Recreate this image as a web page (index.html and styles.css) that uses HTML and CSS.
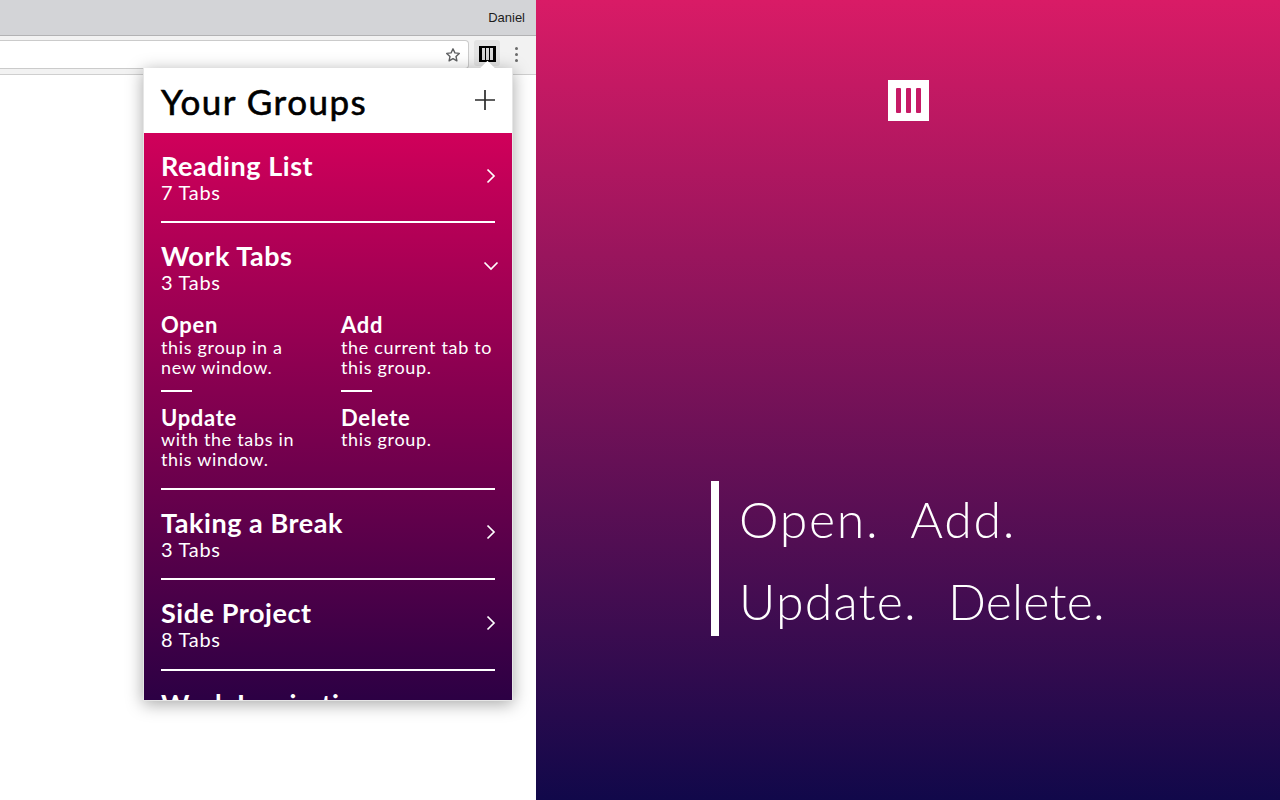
FILE: index.html
```html
<!DOCTYPE html>
<html lang="en">
<head>
<meta charset="utf-8">
<title>Tab groups</title>
<link rel="stylesheet" href="styles.css">
</head>
<body>
<main class="stage">
  <section class="browser">
    <div class="titlebar"><span class="user">Daniel</span></div>
    <div class="toolbar">
      <div class="omnibox">
        <svg class="star" viewBox="0 0 16 16" width="16" height="16"><path d="M8 1.8l1.9 4.1 4.4.5-3.3 3 .9 4.4L8 11.6l-3.9 2.2.9-4.4-3.3-3 4.4-.5z" fill="none" stroke="#5f6062" stroke-width="1.4" stroke-linejoin="round"/></svg>
      </div>
      <div class="ext">
        <span class="ext-logo"><i></i><i></i><i></i></span>
      </div>
      <div class="dots"><i></i><i></i><i></i></div>
    </div>
    <div class="popup">
      <span class="caret"></span>
      <header class="popup-head">
        <h1>Your Groups</h1>
        <svg class="plus" viewBox="0 0 20 20" width="20" height="20"><path d="M10 0v20M0 10h20" stroke="#2b2b2b" stroke-width="1.7" fill="none"/></svg>
      </header>
      <div class="groups">
        <article class="group">
          <div class="group-top">
            <div><h2>Reading List</h2><p class="count">7 Tabs</p></div>
            <svg class="chev" viewBox="0 0 10 16" width="10" height="16"><path d="M1.5 1.5L8 8l-6.500 6.500" fill="none" stroke="#fff" stroke-width="1.700"/></svg>
          </div>
        </article>
        <article class="group open">
          <div class="group-top">
            <div><h2>Work Tabs</h2><p class="count">3 Tabs</p></div>
            <svg class="chev-down" viewBox="0 0 16 10" width="16" height="10"><path d="M1.500 1.500L8 8l6.500-6.500" fill="none" stroke="#fff" stroke-width="1.700"/></svg>
          </div>
          <div class="actions">
            <div class="action ruled"><h3>Open</h3><p>this group in a<br>new window.</p></div>
            <div class="action ruled"><h3>Add</h3><p>the current tab to<br>this group.</p></div>
            <div class="action"><h3>Update</h3><p>with the tabs in<br>this window.</p></div>
            <div class="action"><h3>Delete</h3><p>this group.</p></div>
          </div>
        </article>
        <article class="group">
          <div class="group-top">
            <div><h2>Taking a Break</h2><p class="count">3 Tabs</p></div>
            <svg class="chev" viewBox="0 0 10 16" width="10" height="16"><path d="M1.5 1.5L8 8l-6.500 6.500" fill="none" stroke="#fff" stroke-width="1.700"/></svg>
          </div>
        </article>
        <article class="group">
          <div class="group-top">
            <div><h2>Side Project</h2><p class="count">8 Tabs</p></div>
            <svg class="chev" viewBox="0 0 10 16" width="10" height="16"><path d="M1.5 1.5L8 8l-6.500 6.500" fill="none" stroke="#fff" stroke-width="1.700"/></svg>
          </div>
        </article>
        <article class="group">
          <div class="group-top">
            <div><h2>Work Inspiration</h2></div>
          </div>
        </article>
      </div>
    </div>
  </section>
  <section class="promo">
    <div class="logo"><i></i><i></i><i></i></div>
    <div class="tagline">
      <p class="wide"><span>Open.</span><span>Add.</span></p>
      <p><span>Update.</span><span class="tight">Delete.</span></p>
    </div>
  </section>
</main>
</body>
</html>
```
FILE: styles.css
```css
* { box-sizing: border-box; }
html, body { margin: 0; padding: 0; }
body { width: 1280px; height: 800px; overflow: hidden; font-family: "Lato", "Noto Sans", sans-serif; background: #fff; }
h1, h2, h3, p { margin: 0; font-weight: normal; }

.stage { display: flex; width: 1280px; height: 800px; }

.browser { position: relative; width: 536px; height: 800px; background: #fff; flex: none; }
.titlebar { height: 36px; background: #d3d4d7; border-bottom: 1px solid #b2b2b4; display: flex; justify-content: flex-end; align-items: center; padding: 0 11px 0 0; }
.user { font-family: "Liberation Sans", sans-serif; font-size: 13px; color: #1c1c1c; }
.toolbar { height: 39px; background: #f2f2f2; border-bottom: 1px solid #cfcfcf; display: flex; align-items: flex-start; padding-top: 4px; }
.omnibox { width: 469px; height: 29px; background: #fff; border: 1px solid #cbcbcb; border-left: 0; border-radius: 0 4px 4px 0; display: flex; justify-content: flex-end; align-items: center; padding-right: 7px; flex: none; }
.star { display: block; }
.ext { width: 26px; height: 26px; margin-left: 5px; background: #e3e3e3; border-radius: 3px; display: flex; align-items: center; justify-content: center; flex: none; padding-top: 2px; }
.ext-logo { width: 17px; height: 16px; background: #000; display: flex; justify-content: center; gap: 1px; padding-top: 2px; }
.ext-logo i { width: 3px; height: 12px; background: #d8d8d8; }
.dots { margin-left: 15px; padding-top: 7px; display: flex; flex-direction: column; gap: 3px; }
.dots i { display: block; width: 3px; height: 3px; border-radius: 50%; background: #6a6a6a; }

.popup { position: absolute; left: 143px; top: 68px; width: 370px; height: 633px; background: #fff; border: 1px solid #e6e6e6; border-top: 0; box-shadow: 0 3px 16px rgba(0,0,0,.35); display: flex; flex-direction: column; }
.caret { position: absolute; left: 337.500px; top: -5.500px; width: 11px; height: 11px; background: #fff; transform: rotate(45deg); }
.popup-head { position: relative; height: 65px; flex: none; display: flex; align-items: center; justify-content: space-between; padding: 0 17px 0 17px; }
.popup-head h1 { font-size: 35px; font-weight: 400; color: #000; letter-spacing: 1.500px; -webkit-text-stroke: .6px #000; line-height: 40px; padding-top: 1px; }
.plus { margin-top: -2px; }
.groups { flex: 1; min-height: 0; overflow: hidden; background: linear-gradient(180deg, #d0005a 0%, #2c0044 100%); color: #fff; padding: 0 17px; }
.group { border-bottom: 2px solid #fff; height: 90.500px; padding-top: 18px; }
.group:first-child { height: 90px; }
.group.open { height: 266.500px; }
.group:last-child { border-bottom: 0; }
.group-top { display: flex; justify-content: space-between; align-items: center; }
.group h2 { font-size: 27px; line-height: 30px; font-weight: 700; letter-spacing: .55px; }
.count { font-size: 20px; line-height: 23px; font-weight: 400; letter-spacing: .7px; }
.chev { margin-right: -1px; margin-bottom: 4px; }
.chev-down { margin-right: -4px; margin-bottom: 4px; }

.actions { display: grid; grid-template-columns: 180px 154px; grid-auto-rows: 92.500px; margin-top: 19px; }
.action { position: relative; }
.action h3 { font-size: 22px; line-height: 23px; font-weight: 700; letter-spacing: .7px; }
.action p { font-size: 18px; line-height: 20px; font-weight: 400; letter-spacing: .67px; padding-top: .5px; }
.action.ruled::after { content: ""; position: absolute; left: 0; top: 77px; width: 31px; height: 2px; background: #fff; }

.promo { flex: 1; height: 800px; background: linear-gradient(180deg, #d91b66 0%, #11084a 100%); position: relative; display: flex; flex-direction: column; align-items: center; color: #fff; }
.logo { width: 41px; height: 41px; margin-top: 80px; margin-left: 1px; background: #fff; display: flex; justify-content: center; gap: 5px; padding-top: 8px; }
.logo i { width: 5px; height: 25px; background: #c71a66; border-radius: 1px; }
.tagline { position: absolute; left: 175px; top: 481px; height: 155px; border-left: 8px solid #fff; padding-left: 20px; font-weight: 300; font-size: 50px; line-height: 82px; white-space: nowrap; }
.tagline p { font-weight: 300; letter-spacing: 1.200px; position: relative; top: -3px; }
.tagline p.wide { letter-spacing: 1.700px; }
.tagline span { margin-right: 31px; }
.tagline span.tight { letter-spacing: .2px; }
```
